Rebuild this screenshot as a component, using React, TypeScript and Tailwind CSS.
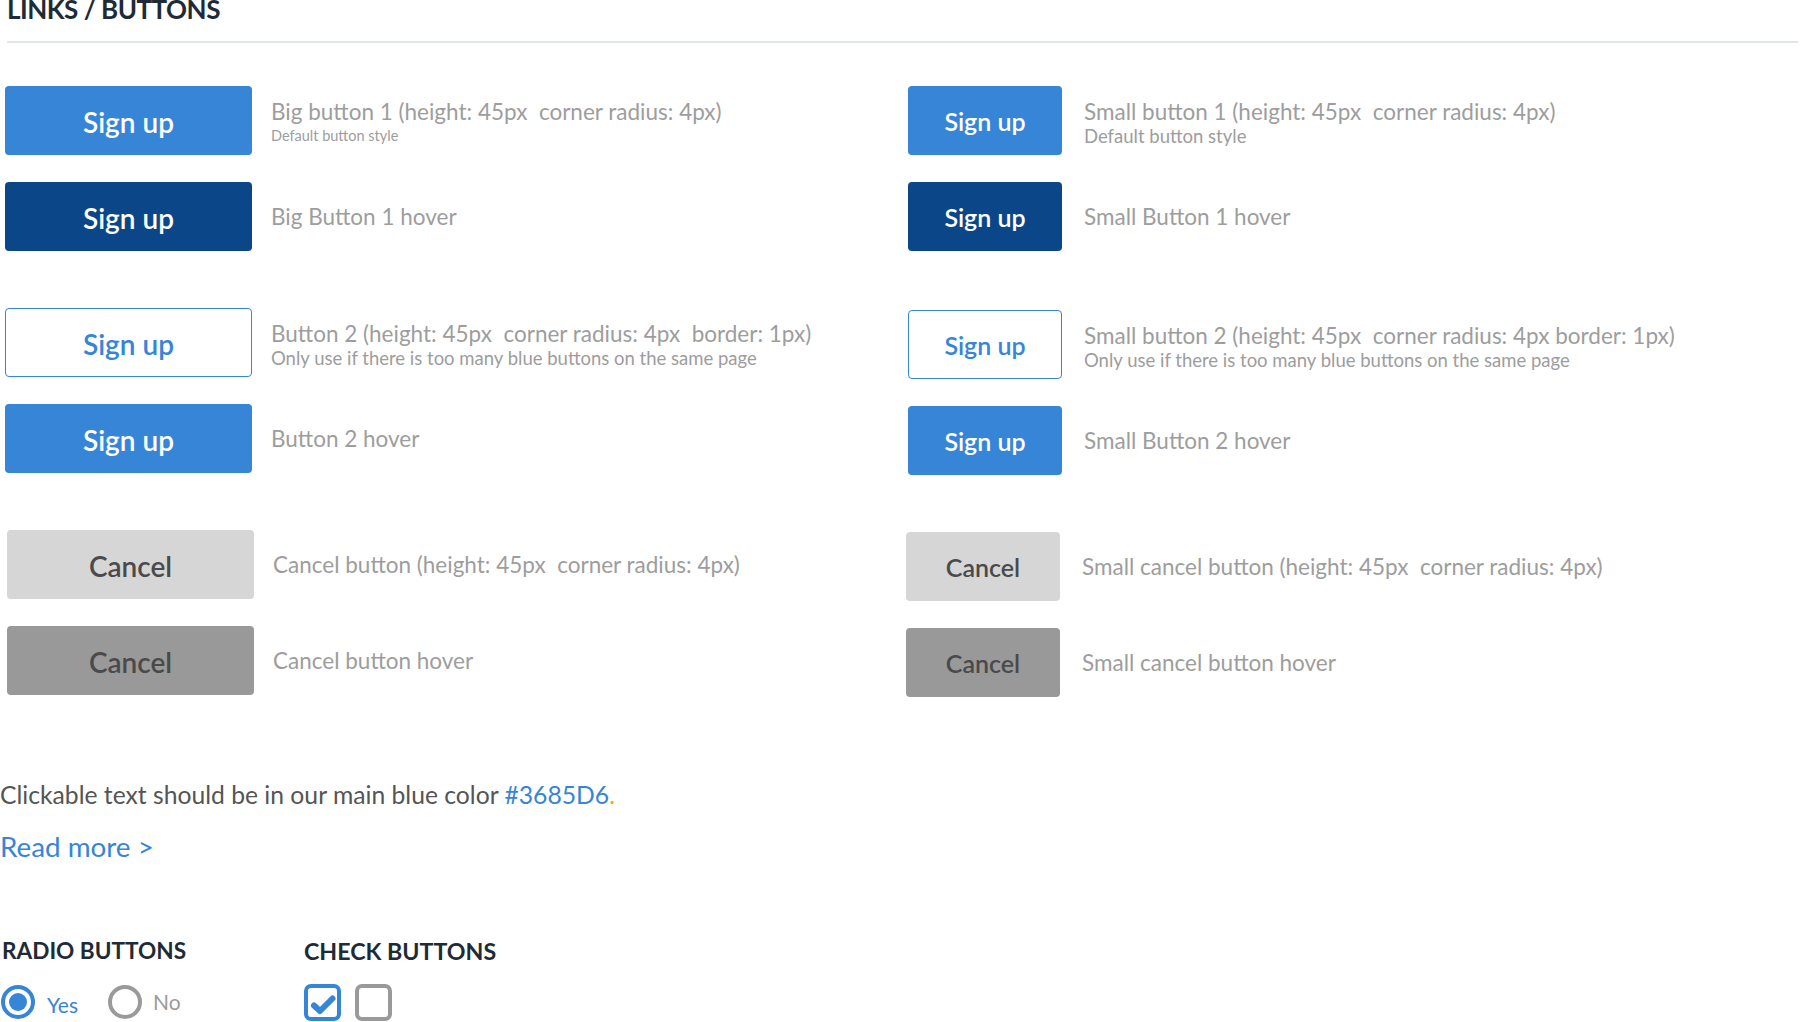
import React from 'react';

const font = { fontFamily: 'Lato, "Open Sans", sans-serif' };

type Variant = 'primary' | 'hover' | 'outline' | 'cancel' | 'cancelHover';

const variantClass: Record<Variant, string> = {
    primary: 'bg-[#3685D6] text-white',
    hover: 'bg-[#0b4788] text-white',
    outline: 'bg-white text-[#3685D6] border border-[#3685D6]',
    cancel: 'bg-[#d6d6d6] text-[#4a4a4a]',
    cancelHover: 'bg-[#999999] text-[#4a4a4a]',
};

function Btn({ variant, small, label }: { variant: Variant; small?: boolean; label: string }) {
    return (
        <div
            className={`${small ? 'w-[154px] text-[25px]' : 'w-[247px] text-[28px]'} h-[69px] shrink-0 rounded-[4px] flex items-center justify-center font-semibold ${variantClass[variant]}`}
        >
            <span className="mt-[3px]">{label}</span>
        </div>
    );
}

interface RowProps {
    variant: Variant;
    small?: boolean;
    label: string;
    title: string;
    sub?: string;
    subSmall?: boolean;
}

function Row({ variant, small, label, title, sub, subSmall }: RowProps) {
    return (
        <div className="flex items-center">
            <Btn variant={variant} small={small} label={label} />
            <div className={`${small ? 'ml-[22px]' : 'ml-[19px]'} flex flex-col whitespace-pre ${sub ? 'mt-[5px]' : 'mt-[1px]'}`}>
                <span className="text-[22.5px] leading-[26px] text-[#9d9d9d]">{title}</span>
                {sub && (
                    <span className={`${subSmall ? 'text-[14.5px]' : 'text-[18.5px]'} leading-[22px] text-[#9d9d9d]`}>{sub}</span>
                )}
            </div>
        </div>
    );
}

const left: RowProps[][] = [
    [
        { variant: 'primary', label: 'Sign up', title: 'Big button 1 (height: 45px  corner radius: 4px)', sub: 'Default button style', subSmall: true },
        { variant: 'hover', label: 'Sign up', title: 'Big Button 1 hover' },
    ],
    [
        { variant: 'outline', label: 'Sign up', title: 'Button 2 (height: 45px  corner radius: 4px  border: 1px)', sub: 'Only use if there is too many blue buttons on the same page' },
        { variant: 'primary', label: 'Sign up', title: 'Button 2 hover' },
    ],
    [
        { variant: 'cancel', label: 'Cancel', title: 'Cancel button (height: 45px  corner radius: 4px)' },
        { variant: 'cancelHover', label: 'Cancel', title: 'Cancel button hover' },
    ],
];

const right: RowProps[][] = [
    [
        { variant: 'primary', small: true, label: 'Sign up', title: 'Small button 1 (height: 45px  corner radius: 4px)', sub: 'Default button style' },
        { variant: 'hover', small: true, label: 'Sign up', title: 'Small Button 1 hover' },
    ],
    [
        { variant: 'outline', small: true, label: 'Sign up', title: 'Small button 2 (height: 45px  corner radius: 4px border: 1px)', sub: 'Only use if there is too many blue buttons on the same page' },
        { variant: 'primary', small: true, label: 'Sign up', title: 'Small Button 2 hover' },
    ],
    [
        { variant: 'cancel', small: true, label: 'Cancel', title: 'Small cancel button (height: 45px  corner radius: 4px)' },
        { variant: 'cancelHover', small: true, label: 'Cancel', title: 'Small cancel button hover' },
    ],
];

function Column({ groups, className }: { groups: RowProps[][]; className: string }) {
    return (
        <div className={`flex flex-col gap-[57px] ${className}`}>
            {groups.map((g, i) => (
                <div key={i} className="flex flex-col gap-[27px] [&:nth-child(3)]:-ml-[2px]">
                    {g.map((r, j) => (
                        <Row key={j} {...r} />
                    ))}
                </div>
            ))}
        </div>
    );
}

export default function App() {
    return (
        <div className="w-[1800px] h-[1022px] overflow-hidden bg-white relative" style={font}>
            <div className="pl-[7px] pr-[2px]">
                <h1 className="text-[26px] leading-[26px] -mt-[4px] font-bold text-[#1e2b36] tracking-[-0.5px]">LINKS / BUTTONS</h1>
                <div className="mt-[19px] h-[2px] bg-[#e1e6ea]" />
            </div>

            <div className="flex mt-[43px]">
                <Column groups={left} className="pl-[5px] w-[908px] [&>div:nth-child(3)]:ml-[2px]" />
                <Column groups={right} className="[&>div:nth-child(2)]:mt-[2px]" />
            </div>

            <p className="mt-[83px] text-[24.7px] leading-[30px] text-[#555555]">
                Clickable text should be in our main blue color <span className="text-[#3685D6]">#3685D6</span>
                <span className="text-[#f5a623]">.</span>
            </p>
            <p className="mt-[21px] text-[27.8px] leading-[32px] text-[#3685D6]">Read more &gt;</p>

            <div className="mt-[75px] flex">
                <div className="w-[304px] pl-[2px]">
                    <h2 className="text-[22.6px] leading-[26px] font-bold text-[#1e2b36]">RADIO BUTTONS</h2>
                    <div className="mt-[20px] flex items-center">
                        <div className="w-[34px] h-[34px] rounded-full border-[4px] border-[#3685D6] flex items-center justify-center -ml-[1px]">
                            <div className="w-[18px] h-[18px] rounded-full bg-[#3685D6]" />
                        </div>
                        <span className="ml-[12px] mt-[5px] text-[21px] text-[#3685D6]">Yes</span>
                        <div className="ml-[30px] w-[34px] h-[34px] rounded-full border-[4px] border-[#9a9a9a]" />
                        <span className="ml-[11px] -mt-[1px] text-[21px] text-[#9a9a9a]">No</span>
                    </div>
                </div>
                <div>
                    <h2 className="text-[23.2px] leading-[26px] font-bold text-[#1e2b36]">CHECK BUTTONS</h2>
                    <div className="mt-[20px] flex items-center gap-[14px]">
                        <div className="relative w-[37px] h-[37px] rounded-[7px] border-[4px] border-[#3685D6]">
                            <svg className="absolute -inset-[4px]" width="37" height="37" viewBox="0 0 37 37">
                                <path d="M10 21.5 L16 27 L28.5 14.5" fill="none" stroke="#3685D6" strokeWidth="6" strokeLinecap="round" strokeLinejoin="round" />
                            </svg>
                        </div>
                        <div className="w-[37px] h-[37px] rounded-[7px] border-[4px] border-[#9a9a9a]" />
                    </div>
                </div>
            </div>
        </div>
    );
}
